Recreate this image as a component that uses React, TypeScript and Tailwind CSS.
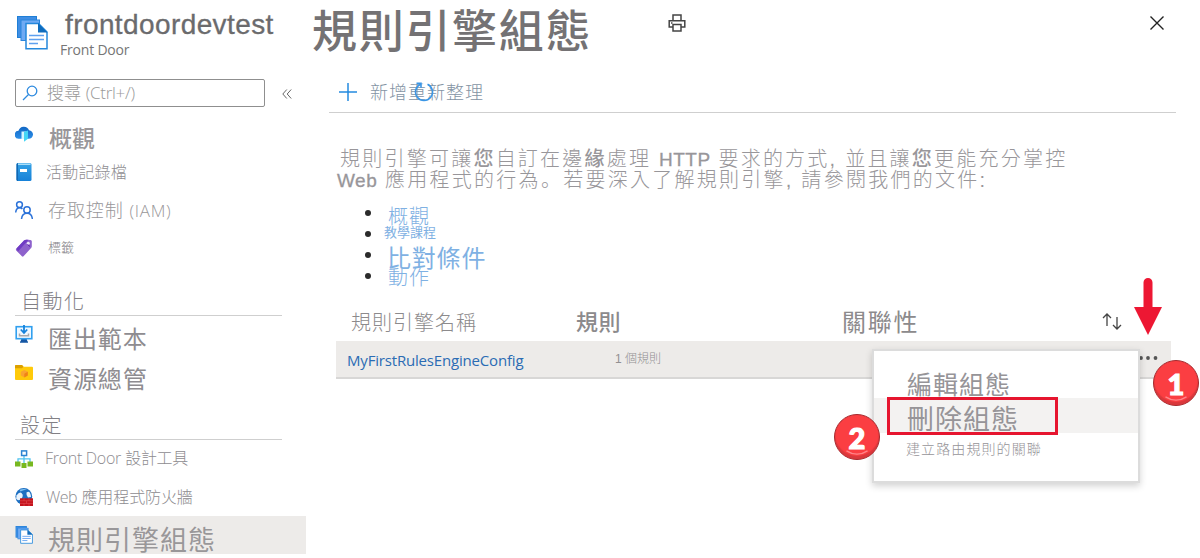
import React from 'react';

const FONT = "font-['Liberation_Sans','Noto_Sans_CJK_TC',sans-serif]";

function PagesIcon({ className }: { className: string }) {
  return (
    <svg viewBox="0 0 32 34" preserveAspectRatio="none" className={className}>
      <path d="M1 0h20v22H1z" fill="#1f7fd6" />
      <path d="M2 1h18v20H2z" fill="#3f8ee4" />
      <path d="M4.500 3.500H24V25H4.500z" fill="#2a85dc" />
      <path d="M5.500 4.500H23V24H5.500z" fill="#6faaf3" />
      <path d="M10 7.500h12.500l8.500 8.500v16.700H10z" fill="#fff" stroke="#2488dc" strokeWidth="1.500" />
      <path d="M22 7v9.500h9.500z" fill="#0f6cbd" />
      <path d="M13 19.500h15M13 23.500h15M13 27.500h9" stroke="#5ea0ef" strokeWidth="1.600" />
    </svg>
  );
}

function CloudIcon() {
  return (
    <svg viewBox="0 0 18 16" className="h-4 w-[18px]">
      <defs>
        <linearGradient id="cloud" x1="0" y1="0" x2="0" y2="1">
          <stop offset="0" stopColor="#1267c4" />
          <stop offset="1" stopColor="#2b8ee8" />
        </linearGradient>
      </defs>
      <path d="M4 12.800A4 4 0 0 1 3.500 4.800 5.500 5.500 0 0 1 14 4.300a4.250 4.250 0 0 1-.5 8.500z" fill="url(#cloud)" />
      <path d="M6.500 5.500h5V13h-5z" fill="#d5f5ff" />
      <path d="M9 6l4-1.500v8.300L9 15.800z" fill="#45d5f5" />
    </svg>
  );
}

function BookIcon() {
  return (
    <svg viewBox="0 0 16 18" className="h-[18px] w-4">
      <defs>
        <linearGradient id="book" x1="0" y1="0" x2="0" y2="1">
          <stop offset="0" stopColor="#35a2e6" />
          <stop offset="1" stopColor="#1681d8" />
        </linearGradient>
      </defs>
      <rect x="0.500" y="0" width="15" height="18" rx="1.500" fill="url(#book)" />
      <rect x="2" y="0.500" width="12.500" height="1.500" fill="#a9def8" />
      <path d="M.5 1.500A1.500 1.500 0 0 1 2 0v18a1.500 1.500 0 0 1-1.500-1.500z" fill="#1267b2" />
      <rect x="4" y="6" width="7" height="3" fill="#fff" />
    </svg>
  );
}

function PeopleIcon() {
  return (
    <svg viewBox="0 0 18 18" className="h-[18px] w-[18px]" fill="none" stroke="#2b72d9" strokeWidth="1.500">
      <circle cx="4.500" cy="3.700" r="2.900" />
      <path d="M.7 11.500c.3-3 2-4.700 4-4.700 1.200 0 2 .4 2.700 1.200" />
      <circle cx="12" cy="9" r="3.200" />
      <path d="M6.500 18c.4-3.500 2.500-5.700 5.500-5.700s5 2.200 5.400 5.700" />
    </svg>
  );
}

function TagIcon() {
  return (
    <svg viewBox="0 0 18 18" className="h-[18px] w-[18px]">
      <path d="M1.200 9.700L9 1.500Q10 .6 11.500 .7l4 .2q1.300.2 1.300 1.400v5q0 1-.7 1.800L8.500 17.300q-.8.7-1.600-.1L1.200 11.400q-.7-.8 0-1.700z" fill="#8e62cc" />
      <path d="M1.500 9.500L9 1.500Q10 .6 11.500 .7l2 .1L3 12.500z" fill="#6f3bc4" />
      <circle cx="13.300" cy="4.300" r="1.500" fill="#eee5fa" />
      <path d="M12.500 5.500l2.500 2" stroke="#5923aa" strokeWidth="1" />
    </svg>
  );
}

function MonitorIcon() {
  return (
    <svg viewBox="0 0 18 18" className="h-[18px] w-[18px]">
      <path d="M6.500 13.500h5l1 3H13v1.200H5v-1.200h.5z" fill="#1557a4" />
      <rect x="1.200" y="1.700" width="15.600" height="12" fill="#f0f8ff" stroke="#31a0ef" strokeWidth="1.600" />
      <path d="M9 0v7M5.800 4.500L9 8l3.200-3.500" fill="none" stroke="#1683dc" strokeWidth="1.800" />
      <path d="M4.500 8.500v2.300h9V8.500" fill="none" stroke="#a5a8ab" strokeWidth="1.500" />
    </svg>
  );
}

function FolderIcon() {
  return (
    <svg viewBox="0 0 18 16" className="h-4 w-[18px]">
      <path d="M0 1q0-1 1-1h6l1.500 1.700H17q1 0 1 1V14q0 1-1 1H1q-1 0-1-1z" fill="#ffca0a" />
      <path d="M0 1q0-1 1-1h6l1.500 1.700L7 3.200H0z" fill="#dca000" />
      <path d="M9.300 5l3.500 1.800v3.700l-3.500 2-3.500-2V6.800z" fill="#f9a32f" />
      <path d="M9.300 8.700v3.800l3.500-2V6.800z" fill="#f08414" />
    </svg>
  );
}

function DesignerIcon() {
  return (
    <svg viewBox="0 0 18 18" className="h-[18px] w-[18px]">
      <path d="M9 5v8M3 12V8.800h12V12" fill="none" stroke="#51c4ee" strokeWidth="1.300" />
      <rect x="6.600" y="0.900" width="5" height="4.600" fill="#fff" stroke="#2c83d2" strokeWidth="1.500" />
      <rect x="0" y="11.500" width="5.500" height="5" fill="#78b820" />
      <rect x="6.500" y="13" width="5" height="5" fill="#78b820" />
      <rect x="12.500" y="11.500" width="5.500" height="5" fill="#78b820" />
    </svg>
  );
}

function FirewallIcon() {
  return (
    <svg viewBox="0 0 18 18" className="h-[18px] w-[18px]">
      <circle cx="8.800" cy="8.500" r="8.400" fill="#1d6fc2" />
      <path d="M1.500 7.500q3-4 5-2.500t1 4-3 3-3.300-1z" fill="#e8f2fc" />
      <path d="M11.500 4.500q2.500-1.500 3.500.5t1 4l-3 .5q-2-2-1.500-5z" fill="#e8f2fc" />
      <path d="M4.500 1.800q4-1.500 7.500-.3-3.500.5-6.500 2z" fill="#7fc0f0" />
      <rect x="5" y="10.300" width="13" height="7.700" fill="#c4141d" />
      <path d="M5 12.800h13M5 15.400h13M9 10.300v2.500M14 10.300v2.500M11.500 12.800v2.600M9 15.400V18M14 15.400V18" stroke="#e8565c" strokeWidth="0.500" />
    </svg>
  );
}

type NavProps = {
  icon: React.ReactNode;
  label: React.ReactNode;
  row: string;
  iconPad: string;
  text: string;
};

function NavRow({ icon, label, row, iconPad, text }: NavProps) {
  return (
    <div className={`flex items-start pl-[15px] ${row}`}>
      <span className={`flex w-[18px] shrink-0 justify-center ${iconPad}`}>{icon}</span>
      <span className={`whitespace-nowrap leading-none ${text}`}>{label}</span>
    </div>
  );
}

function Latin({ children, className = '' }: { children: React.ReactNode; className?: string }) {
  return <span className={`font-['Open_Sans',sans-serif] font-light ${className}`}>{children}</span>;
}

function Badge({ n, className }: { n: string; className: string }) {
  return (
    <div className={`absolute flex h-[46px] w-[46px] items-center justify-center rounded-full border border-[#a52a2e] bg-[#fb3e42] shadow-[inset_0_-3px_1px_#d9383c] ${className}`}>
      <svg viewBox="0 0 46 46" className="absolute h-full w-full">
        <path d="M12 37.500q11 7 22 0" fill="none" stroke="#ff8589" strokeWidth="1.300" />
      </svg>
      <span className="relative font-['Lato',sans-serif] text-[29px] leading-none font-black text-white [-webkit-text-stroke:1.2px_white]">{n}</span>
    </div>
  );
}

function Sidebar() {
  return (
    <aside className="w-[306px] shrink-0">
      <div className="flex h-[79px] items-start pl-4">
        <PagesIcon className="mt-[16px] h-[34px] w-8" />
        <div className="pl-3">
          <div className="pt-[11px] pl-[5px] text-[28px] leading-7 tracking-[0.400px] text-[#6b6b6d] [-webkit-text-stroke:0.3px_#6b6b6d]">frontdoordevtest</div>
          <div className="pt-[2px] font-['Open_Sans',sans-serif] text-[14px] leading-[18px] tracking-[-0.200px] text-[#767676]">Front Door</div>
        </div>
      </div>
      <div className="flex h-[39px] items-start pl-[15px]">
        <div className="flex h-7 w-[250px] items-center rounded-[2px] border border-[#8f8f8f] pl-[6px]">
          <svg viewBox="0 0 16 16" className="h-4 w-4" fill="none" stroke="#2d8adf" strokeWidth="1.300">
            <circle cx="10" cy="6" r="4.800" />
            <path d="M6.500 9.500L1 15" />
          </svg>
          <span className="pl-[9px] text-[17px] leading-none font-light text-[#999]">搜尋 <Latin className="tracking-[-0.300px]">(Ctrl+/)</Latin></span>
        </div>
        <svg viewBox="0 0 10 10" className="mt-[10px] ml-[17px] h-[10px] w-[10px]" fill="none" stroke="#666" strokeWidth="1">
          <path d="M4.800 .5L.8 5l4 4.500M9.200 .5l-4 4.500 4 4.500" />
        </svg>
      </div>
      <NavRow icon={<CloudIcon />} label="概觀" row="h-[37px]" iconPad="pt-[8px]" text="pl-[16px] pt-[10px] text-[23px] font-medium text-[#99979a]" />
      <NavRow icon={<BookIcon />} label="活動記錄檔" row="h-9" iconPad="pt-[8px]" text="pl-[13px] pt-[10px] text-[16px] tracking-[0.200px] font-light text-[#918f93]" />
      <NavRow icon={<PeopleIcon />} label={<>存取控制 <Latin className="text-[17px] tracking-[0.700px]">(IAM)</Latin></>} row="h-[38px]" iconPad="pt-[10px]" text="pl-[15px] pt-[11px] text-[18px] tracking-[0.900px] font-light text-[#99979a]" />
      <NavRow icon={<TagIcon />} label="標籤" row="h-[37px]" iconPad="pt-[10px]" text="pl-[15px] pt-[12px] text-[13px] font-light text-[#858387]" />
      <div className="ml-[15px] h-[50px] w-[267px] border-b border-[#cfcfcf] pt-[26px] pl-[6px] text-[20px] leading-none font-light tracking-[1.500px] text-[#828085]">自動化</div>
      <NavRow icon={<MonitorIcon />} label="匯出範本" row="h-[42px]" iconPad="pt-[9px]" text="pl-[15px] pt-[12px] text-[24px] tracking-[0.900px] text-[#8e8c90]" />
      <NavRow icon={<FolderIcon />} label="資源總管" row="h-[42px]" iconPad="pt-[7px]" text="pl-[15px] pt-[10px] text-[24px] tracking-[0.900px] text-[#8e8c90]" />
      <div className="ml-[15px] h-10 w-[267px] border-b border-[#cfcfcf] pt-[16px] pl-[5px] text-[20px] leading-none font-light tracking-[1.500px] text-[#828085]">設定</div>
      <NavRow icon={<DesignerIcon />} label={<><Latin className="tracking-[-0.300px]">Front Door</Latin> <span className="tracking-[-0.400px]">設計工具</span></>} row="h-[37px]" iconPad="pt-[10px]" text="pl-[12px] pt-[10px] text-[16px] font-light text-[#8e8c90]" />
      <NavRow icon={<FirewallIcon />} label={<><Latin className="tracking-[-0.500px]">Web</Latin> 應用程式防火牆</>} row="h-[39px]" iconPad="pt-[11px]" text="pl-[13px] pt-[12px] text-[16px] font-light tracking-[-0.100px] text-[#8e8c90]" />
      <NavRow icon={<PagesIcon className="h-[18px] w-[18px]" />} label="規則引擎組態" row="h-[38px] bg-[#edebe9]" iconPad="pt-[10px]" text="pl-[15px] pt-[12px] text-[27px] tracking-[1px] text-[#999799]" />
    </aside>
  );
}

function DocLink({ label, row, text }: { label: string; row: string; text: string }) {
  return (
    <li className={`flex items-center ${row}`}>
      <span className="h-[6px] w-[6px] shrink-0 rounded-full bg-[#2b2b2b]" />
      <span className={`whitespace-nowrap text-[#7fb1e3] ${text}`}>{label}</span>
    </li>
  );
}

function ContextMenu() {
  return (
    <div className="absolute top-[349px] left-[872px] h-[134px] w-[268px] border-2 border-[#dcdcdc] bg-white pt-[18px] text-[#969498] shadow-[0_3px_7px_rgba(0,0,0,0.18)]">
      <div className="flex h-[29px] items-center pt-[4px] pl-[33px] text-[25px] leading-none tracking-[1px]">編輯組態</div>
      <div className="flex h-[35px] items-center bg-[#f3f2f1] pt-[10px] pl-[33px] text-[27px] leading-none tracking-[1px]">刪除組態</div>
      <div className="flex h-[31px] items-center pl-[32px] text-[14px] leading-none font-light tracking-[1.100px]">建立路由規則的關聯</div>
      <div className="absolute top-[46px] left-[13px] h-[38px] w-[171px] border-[3px] border-[#e6152f]" />
    </div>
  );
}

export default function App() {
  return (
    <div className={`relative flex h-[558px] w-[1200px] overflow-hidden bg-white ${FONT}`}>
      <Sidebar />
      <main className="flex-1">
        <header className="flex h-[70px] items-start pl-[6px]">
          <h1 className="w-[356px] pt-[10px] text-[45px] leading-none font-medium tracking-[1.700px] whitespace-nowrap text-[#747274]">規則引擎組態</h1>
          <svg viewBox="0 0 18 18" className="mt-[14px] h-[18px] w-[18px]" fill="none" stroke="#444" strokeWidth="1.500">
            <path d="M5 6V1h8v5M4.500 13H1.200V6.800h15.600V13H13.500M5 10.500h8V17H5z" />
            <path d="M3 9h1.500" />
          </svg>
          <svg viewBox="0 0 16 16" className="mt-[15px] ml-[463px] h-4 w-4" fill="none" stroke="#222" strokeWidth="1.400">
            <path d="M1.500 1.500l13 13M14.500 1.500l-13 13" />
          </svg>
        </header>
        <div className="relative ml-[23px] flex h-[43px] w-[847px] items-start border-b border-[#cfcfcf] pl-[10px]">
          <svg viewBox="0 0 18 18" className="mt-[13px] h-[18px] w-[18px]" stroke="#248be0" strokeWidth="1.500">
            <path d="M9 0v18M0 9h18" />
          </svg>
          <span className="pt-[14px] pl-[13px] text-[18px] leading-none font-light tracking-[1px] text-[#8494a4]">新增重新整理</span>
          <svg viewBox="0 0 20 20" className="absolute top-[12px] left-[85px] h-5 w-5" fill="none" stroke="#3a96e6" strokeWidth="1.600">
            <path d="M6.500 2.300A8.500 8.500 0 1 0 13.500 2.300M2.500 1.200h4.500v4.500" />
          </svg>
        </div>
        <div className="pt-[36px] pl-[31px] text-[20px] leading-[21px] font-light whitespace-nowrap text-[#98969a]">
          <p className="h-[21px] pl-[3px] tracking-[2.230px]">
            規則引擎可讓<b className="font-medium">您</b>自訂在邊<b className="font-medium">緣</b>處理 <span className="text-[19px] leading-none tracking-[0.500px] [-webkit-text-stroke:0.3px_#98969a]">HTTP</span> 要求的方式, 並且讓<b className="font-medium">您</b>更能充分掌控
          </p>
          <p className="h-[21px] tracking-[2.260px]">
            <span className="text-[19px] leading-none tracking-[0.500px] [-webkit-text-stroke:0.3px_#98969a]">Web</span> 應用程式的行為<span className="font-['Liberation_Sans','Noto_Sans_CJK_SC',sans-serif] leading-none">。</span>若要深入了解規則引擎, 請參閱我們的文件:
          </p>
        </div>
        <ul className="pt-[11px] pl-[59px]">
          <DocLink label="概觀" row="h-[21px]" text="pl-[17px] pt-[9px] text-[20px] leading-[16px] font-light tracking-[1px]" />
          <DocLink label="教學課程" row="h-[21px]" text="pl-[13px] -mt-[3px] text-[13px] leading-[13px]" />
          <DocLink label="比對條件" row="h-[21px]" text="pl-[16px] pt-[8px] text-[24px] leading-[17px] tracking-[0.800px]" />
          <DocLink label="動作" row="h-[21px]" text="pl-[17px] pt-[5px] text-[20px] leading-[16px] font-light tracking-[1px]" />
        </ul>
        <div className="mt-[17px] ml-[30px] flex h-[38px] w-[835px] items-center pt-[2px] pl-[15px] leading-none text-[#8c8a8c]">
          <span className="w-[225px] text-[20px] font-light tracking-[1px]">規則引擎名稱</span>
          <span className="w-[266px] text-[22px] font-medium tracking-[0.500px]">規則</span>
          <span className="w-[260px] text-[24px] tracking-[1.700px]">關聯性</span>
          <svg viewBox="0 0 20 18" className="-mt-[3px] h-[18px] w-5" fill="none" stroke="#444" strokeWidth="1.300">
            <path d="M5 13V1M1 5l4-4 4 4M15 4v12M11 12l4 4 4-4" />
          </svg>
        </div>
        <div className="ml-[30px] flex h-[38px] w-[835px] items-center border-b-2 border-[#d8d7d6] bg-[#edebe9] pl-[11px]">
          <span className="w-[268px] pt-[3px] font-['Open_Sans',sans-serif] text-[15px] leading-none tracking-[-0.180px] text-[#2b6cb4]">MyFirstRulesEngineConfig</span>
          <span className="w-[523px] text-[12px] leading-none font-light text-[#929092]">1 個規則</span>
          <svg viewBox="0 0 20 4" className="-mt-[2px] h-1 w-5" fill="#555">
            <circle cx="3" cy="2" r="1.900" />
            <circle cx="10" cy="2" r="1.900" />
            <circle cx="17.500" cy="2" r="1.900" />
          </svg>
        </div>
      </main>
      <ContextMenu />
      <Badge n="1" className="top-[360px] left-[1153px]" />
      <Badge n="2" className="top-[414px] left-[834px]" />
      <svg viewBox="0 0 28 57" className="absolute top-[278px] left-[1134px] h-[57px] w-7" fill="#ed1733">
        <path d="M9.500 4.500a4.500 4.500 0 0 1 9 0V29H28L14 57 0 29h9.500z" />
      </svg>
    </div>
  );
}
